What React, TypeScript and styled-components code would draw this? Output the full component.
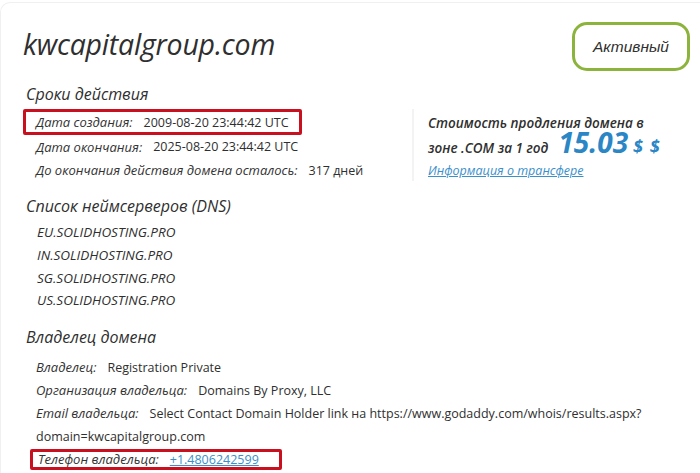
import React from 'react';
import styled, { createGlobalStyle } from 'styled-components';

const GlobalStyle = createGlobalStyle`
  html, body {
    margin: 0;
    padding: 0;
    background: #ffffff;
  }
  body {
    font-family: "Open Sans", "Noto Sans", sans-serif;
    color: #333333;
  }
`;

const COLORS = {
  TEXT: '#2f2f2f',
  LABEL: '#333333',
  BLUE: '#2a86c5',
  LINK: '#3b8fcb',
  GREEN: '#8cb43c',
  RED: '#c8101e',
  BORDER: '#f0f0f0',
};

const Card = styled.div`
  margin: 2px 0 0 0;
  height: 471px;
  box-sizing: border-box;
  border-top: 1px solid ${COLORS.BORDER};
  border-left: 1px solid ${COLORS.BORDER};
  border-top-left-radius: 10px;
  padding: 20px 10px 0 22px;
  overflow: hidden;
`;

const Header = styled.header`
  display: flex;
  justify-content: space-between;
  align-items: flex-start;
`;

const Title = styled.h1`
  margin: 4px 0 0 0;
  font-size: 28.5px;
  font-weight: 400;
  font-style: italic;
  letter-spacing: -0.2px;
  color: ${COLORS.TEXT};
  line-height: 34px;
`;

const StatusBadge = styled.div`
  box-sizing: border-box;
  margin-top: -1px;
  width: 118px;
  height: 49px;
  border: 3px solid ${COLORS.GREEN};
  border-radius: 15px;
  display: flex;
  align-items: center;
  justify-content: center;
  font-family: "Liberation Sans", Arial, sans-serif;
  font-style: italic;
  font-size: 15.5px;
  color: ${COLORS.TEXT};
`;

const SectionTitle = styled.h2<{ $top: number }>`
  margin: ${({ $top }) => $top}px 0 0 3px;
  font-size: 16px;
  font-weight: 400;
  font-style: italic;
  line-height: 22px;
  color: ${COLORS.TEXT};
`;

const TermsRow = styled.div`
  display: flex;
  align-items: flex-start;
`;

const RowList = styled.div<{ $step: number; $pad?: number; $width?: number }>`
  display: flex;
  flex-direction: column;
  padding-top: ${({ $pad }) => $pad ?? 4}px;
  flex: ${({ $width }) => ($width ? `0 0 ${$width}px` : '0 1 auto')};
  & > * {
    height: ${({ $step }) => $step}px;
  }
`;

const Row = styled.div`
  display: flex;
  align-items: center;
  box-sizing: border-box;
  font-size: 12.5px;
  white-space: nowrap;
  padding-left: 13px;
`;

// a row wrapped in the red highlight frame
const BoxedRow = styled(Row)<{ $left: number; $inset: number; $width: number; $height: number; $top?: number }>`
  && {
    height: ${({ $height }) => $height}px;
  }
  margin-left: ${({ $left }) => $left}px;
  margin-top: ${({ $top }) => $top ?? 0}px;
  padding-left: ${({ $inset }) => $inset}px;
  width: ${({ $width }) => $width}px;
  border: 3px solid ${COLORS.RED};
  border-radius: 2px;
`;

const Label = styled.span`
  font-size: 13px;
  font-style: italic;
  color: ${COLORS.LABEL};
  margin-right: 11px;
`;

const Value = styled.span`
  color: ${COLORS.TEXT};
`;

const PhoneLink = styled.a`
  color: ${COLORS.LINK};
  text-decoration: underline;
`;

const WrapLine = styled.div`
  padding-left: 13px;
  font-size: 12.5px;
  display: flex;
  align-items: center;
  color: ${COLORS.TEXT};
`;

const PricePanel = styled.aside`
  margin-top: 4px;
  padding: 3px 0 2px 14px;
  border-left: 2px solid #f3f3f3;
  white-space: nowrap;
`;

const PriceText = styled.div`
  font-size: 13.5px;
  font-style: italic;
  font-weight: 600;
  color: ${COLORS.TEXT};
  line-height: 22px;
`;

const PriceLine = styled.div`
  display: flex;
  align-items: baseline;
  height: 30px;
  margin-top: -7px;
`;

const Price = styled.span`
  margin-left: 10px;
  font-size: 28px;
  font-weight: 700;
  font-style: italic;
  color: ${COLORS.BLUE};
  line-height: 30px;
`;

const Currency = styled.span`
  margin-left: 5px;
  font-size: 18px;
  font-weight: 700;
  font-style: italic;
  color: ${COLORS.BLUE};
  letter-spacing: 1px;
`;

const TransferLink = styled.a`
  display: block;
  margin-top: 6px;
  font-size: 12.5px;
  line-height: 16px;
  font-style: italic;
  color: ${COLORS.LINK};
  text-decoration: underline;
`;

const NsItem = styled.div`
  padding-left: 14px;
  display: flex;
  align-items: center;
  font-size: 13.5px;
  font-style: italic;
  color: ${COLORS.TEXT};
`;

const nameservers = [
  'EU.SOLIDHOSTING.PRO',
  'IN.SOLIDHOSTING.PRO',
  'SG.SOLIDHOSTING.PRO',
  'US.SOLIDHOSTING.PRO',
];

export default function App() {
  return (
    <>
      <GlobalStyle />
      <Card>
        <Header>
          <Title>kwcapitalgroup.com</Title>
          <StatusBadge>Активный</StatusBadge>
        </Header>

        <SectionTitle $top={12}>Сроки действия</SectionTitle>
        <TermsRow>
          <RowList $step={23.5} $width={389}>
            <BoxedRow $left={0} $inset={10} $width={279} $height={26}>
              <Label>Дата создания:</Label>
              <Value>2009-08-20 23:44:42 UTC</Value>
            </BoxedRow>
            <Row>
              <Label>Дата окончания:</Label>
              <Value>2025-08-20 23:44:42 UTC</Value>
            </Row>
            <Row>
              <Label>До окончания действия домена осталось:</Label>
              <Value>317 дней</Value>
            </Row>
          </RowList>
          <PricePanel>
            <PriceText>Стоимость продления домена в</PriceText>
            <PriceLine>
              <PriceText>зоне .COM за 1 год</PriceText>
              <Price>15.03</Price>
              <Currency>$ $</Currency>
            </PriceLine>
            <TransferLink href="#">Информация о трансфере</TransferLink>
          </PricePanel>
        </TermsRow>

        <SectionTitle $top={13}>Список неймсерверов (DNS)</SectionTitle>
        <RowList $step={22.7}>
          {nameservers.map((ns) => (
            <NsItem key={ns}>{ns}</NsItem>
          ))}
        </RowList>

        <SectionTitle $top={14}>Владелец домена</SectionTitle>
        <RowList $step={23} $pad={8}>
          <Row>
            <Label>Владелец:</Label>
            <Value>Registration Private</Value>
          </Row>
          <Row>
            <Label>Организация владельца:</Label>
            <Value>Domains By Proxy, LLC</Value>
          </Row>
          <Row>
            <Label>Email владельца:</Label>
            <Value>Select Contact Domain Holder link на https://www.godaddy.com/whois/results.aspx?</Value>
          </Row>
          <WrapLine>domain=kwcapitalgroup.com</WrapLine>
          <BoxedRow $left={7} $inset={5} $width={252} $height={21} $top={1}>
            <Label>Телефон владельца:</Label>
            <PhoneLink href="#">+1.4806242599</PhoneLink>
          </BoxedRow>
        </RowList>
      </Card>
    </>
  );
}
